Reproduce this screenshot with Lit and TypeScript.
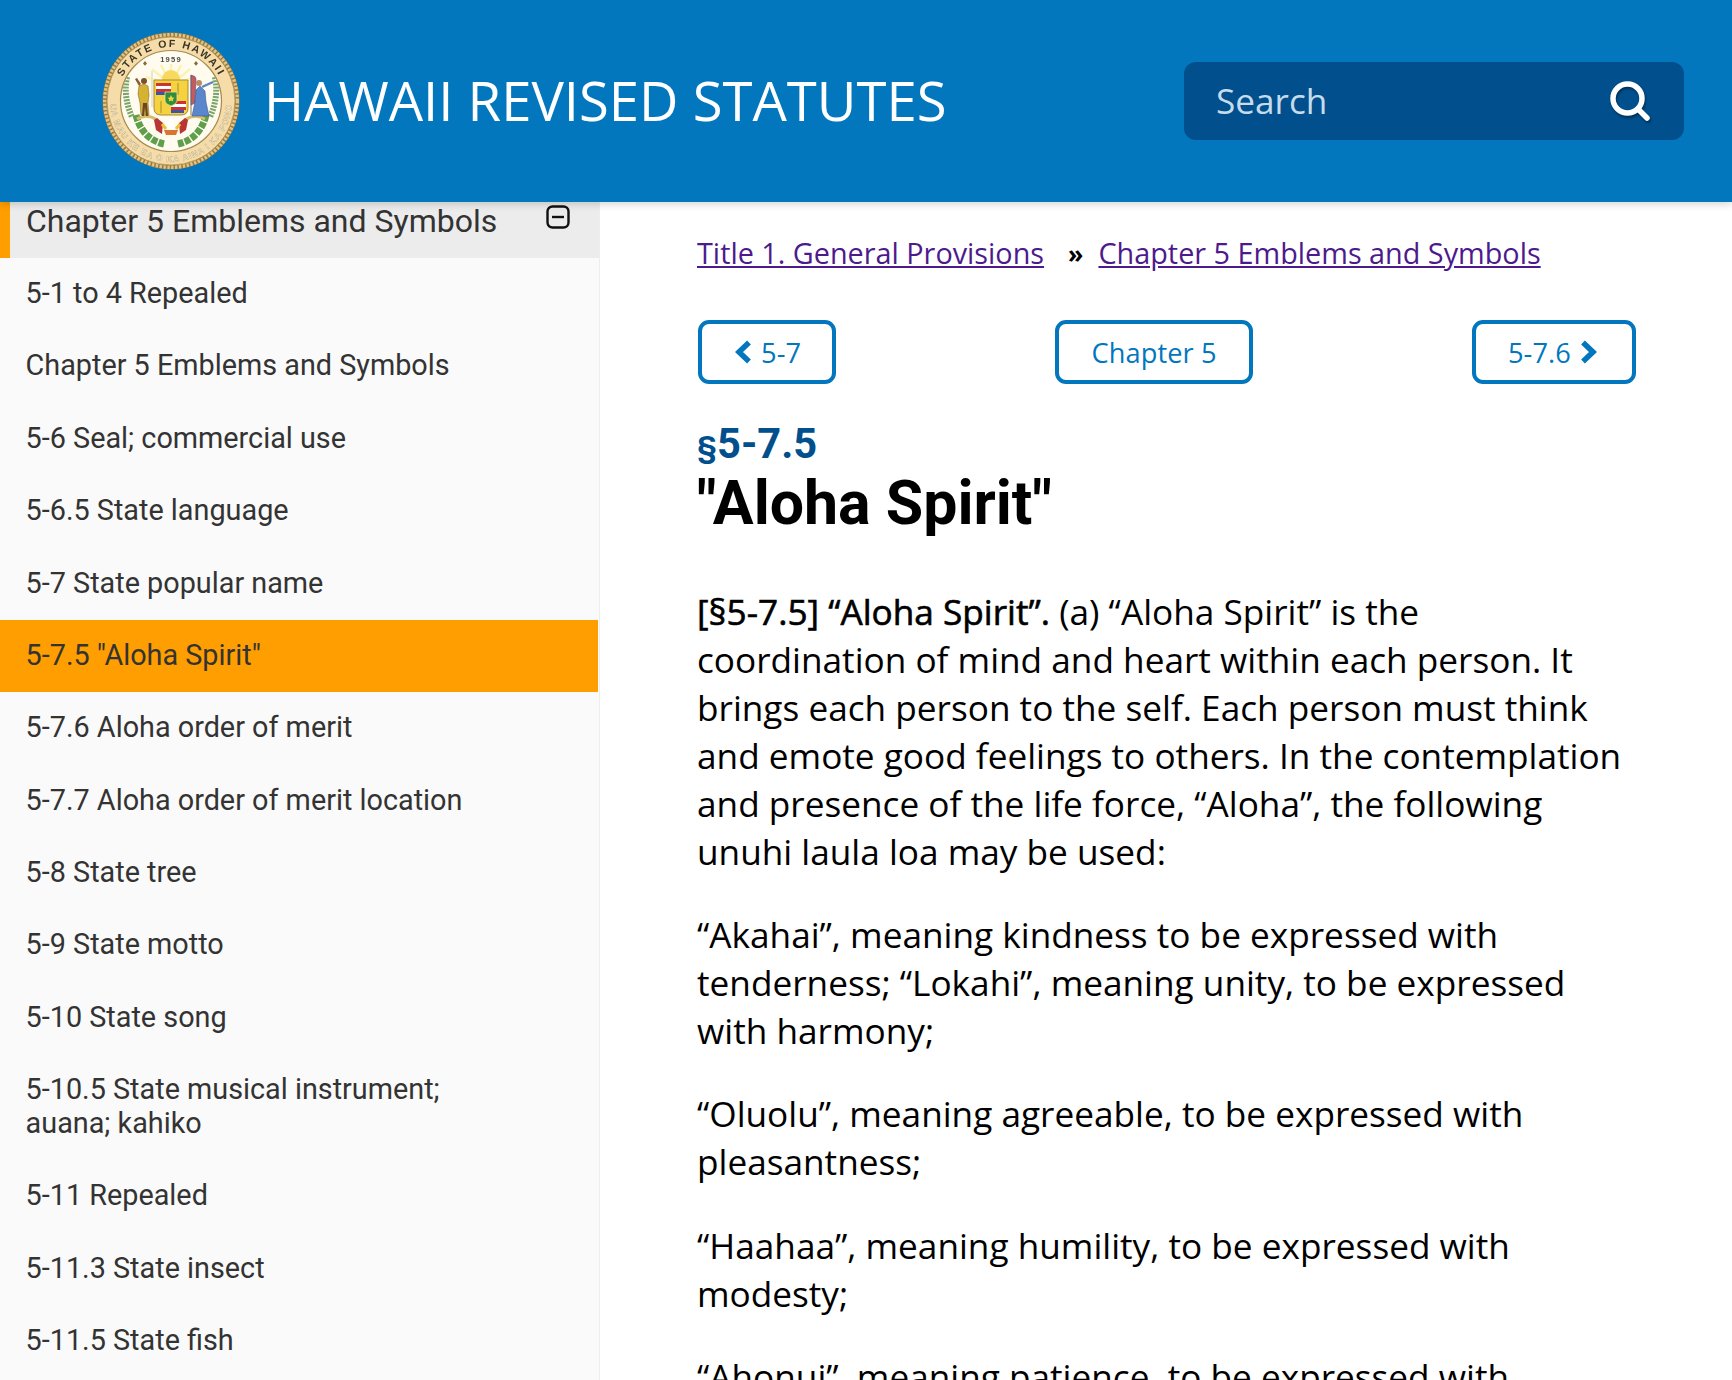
import { LitElement, html, css, svg } from "lit";
import { customElement } from "lit/decorators.js";

const ROWS: { t: string; active?: boolean }[] = [
  { t: "5-1 to 4 Repealed" },
  { t: "Chapter 5 Emblems and Symbols" },
  { t: "5-6 Seal; commercial use" },
  { t: "5-6.5 State language" },
  { t: "5-7 State popular name" },
  { t: '5-7.5 "Aloha Spirit"', active: true },
  { t: "5-7.6 Aloha order of merit" },
  { t: "5-7.7 Aloha order of merit location" },
  { t: "5-8 State tree" },
  { t: "5-9 State motto" },
  { t: "5-10 State song" },
  { t: "5-10.5 State musical instrument; auana; kahiko" },
  { t: "5-11 Repealed" },
  { t: "5-11.3 State insect" },
  { t: "5-11.5 State fish" },
];

const seal = svg`
<svg viewBox="0 0 140 140" width="140" height="140" aria-hidden="true">
  <defs>
    <path id="topArc" d="M 16 70 A 54 54 0 0 1 124 70"/>
    <path id="botArc" d="M 9 70 A 61 61 0 0 0 131 70"/>
    <clipPath id="inner"><circle cx="70" cy="70" r="50"/></clipPath>
  </defs>
  <circle cx="70" cy="70" r="68.5" fill="#9a7a3e"/>
  <circle cx="70" cy="70" r="66.3" fill="none" stroke="#e2c486" stroke-width="3.4" stroke-dasharray="2.4 1.5"/>
  <circle cx="70" cy="70" r="64" fill="#f6dca8" stroke="#b2924f" stroke-width=".8"/>
  <circle cx="70" cy="70" r="50.5" fill="#fffbee" stroke="#a68a52" stroke-width="1.2"/>
  <text font-family="Liberation Sans, sans-serif" font-size="10.5" font-weight="700" fill="#3a3426" letter-spacing="1.9"><textPath href="#topArc" startOffset="50%" text-anchor="middle">STATE OF HAWAII</textPath></text>
  <text font-family="Liberation Sans, sans-serif" font-size="8.6" font-weight="700" fill="#f4ead0" stroke="#b7a675" stroke-width=".35" letter-spacing=".9"><textPath href="#botArc" startOffset="50%" text-anchor="middle">UA MAU KE EA O KA AINA I KA PONO</textPath></text>
  <text x="70" y="30.5" text-anchor="middle" font-family="Liberation Sans, sans-serif" font-size="7.6" font-weight="700" fill="#4a4a4a" letter-spacing="1.2">1959</text>
  <path d="M44 30l2 2.4-2 2.4-2-2.4zM95 30l2 2.4-2 2.4-2-2.4z" fill="#8a6a38"/>
  <g clip-path="url(#inner)">
    <g stroke="#fbf3ae" stroke-width="2.4">
      <path d="M70 54V33M70 54L60 34M70 54L80 34M70 54L51 38M70 54L89 38M70 54L45 46M70 54L95 46"/>
    </g>
    <circle cx="70" cy="48" r="9" fill="#f8d95e"/>
    <path d="M26 46q-4 20 5 40M114 46q4 20-5 40" fill="none" stroke="#7ba56a" stroke-width="6" stroke-dasharray="2 1.2"/>
    <path d="M35 84q6 24 28 29M105 84q-6 24-28 29" fill="none" stroke="#5f9e4a" stroke-width="7" stroke-dasharray="6 1.4"/>
    <path d="M36 88q10-6 20 1M104 88q-10-6-20 1" fill="none" stroke="#d6bd6b" stroke-width="3"/>
  </g>
  <path d="M53 49h34v28q0 7-7 7H60q-7 0-7-7z" fill="#f5d33e" stroke="#a8893a" stroke-width="1"/>
  <path d="M55 52h15v3h-15zM55 58h15v3h-15z" fill="#c93434"/>
  <path d="M55 55h15v3h-15z" fill="#fff"/>
  <path d="M55 61h15v3h-15z" fill="#3a55a8"/>
  <path d="M70 70h15v3h-15zM70 76h15v3h-15z" fill="#c93434"/>
  <path d="M70 73h15v3h-15z" fill="#fff"/>
  <path d="M70 79h13v3H70z" fill="#3a55a8"/>
  <path d="M77 52v12M60 70v12" stroke="#a8893a" stroke-width="1"/>
  <path d="M64 61h12v9q0 3-6 5q-6-2-6-5z" fill="#2f8d3e" stroke="#eee39a" stroke-width=".8"/>
  <path d="M70 64l1.2 2.4 2.3.3-1.7 1.6.4 2.3-2.2-1.1-2.2 1.1.4-2.3-1.7-1.6 2.3-.3z" fill="#f5d33e"/>
  <path d="M38 55l5-2 4 2 1 9-1 8 1 12h-8l-1-12-2-9z" fill="#d6b233" stroke="#6f5a1e" stroke-width=".5"/>
  <path d="M38 55l-4-7 2-1 4 6z" fill="#8a5a30"/>
  <circle cx="43" cy="50" r="3" fill="#7d5028"/>
  <path d="M42 72h4l1 13h-2l-1-9-1 9h-2z" fill="#6a4526"/>
  <path d="M51 40v36" stroke="#e7e2d0" stroke-width="1.8"/>
  <path d="M90 44v40" stroke="#8f7a4a" stroke-width="1"/>
  <path d="M90 44q5 1 5 4l-1 24-4 2z" fill="#c85a5a" stroke="#3a55a8" stroke-width=".6"/>
  <path d="M99 55l-4 4-1 12-3 14h17l-3-14-1-11z" fill="#5a86cc" stroke="#2f4f8a" stroke-width=".5"/>
  <circle cx="98" cy="52" r="3" fill="#b98a64"/>
  <path d="M101 56l11-5" stroke="#5a86cc" stroke-width="2.4"/>
  <path d="M62 92l-6-5-3 2 2 10 6 4zM78 92l6-5 3 2-2 10-6 4z" fill="#b93434"/>
  <path d="M66 98l2-10h4l2 10z" fill="#fff"/>
  <path d="M63 99h14l-2 5H65z" fill="#d8752e"/>
  <path d="M61 93l4 5M79 93l-4 5" stroke="#e8c23a" stroke-width="3"/>
</svg>`;

@customElement("app-root")
export class AppRoot extends LitElement {
  static styles = css`
    :host {
      display: block;
      width: 1732px;
      height: 1380px;
      overflow: hidden;
      position: relative;
      background: #fff;
      font-family: "Open Sans", sans-serif;
      color: #000;
    }
    .top {
      position: relative;
      z-index: 2;
      height: 202px;
      background: #0277bd;
      box-shadow: 0 2px 8px rgba(0, 0, 0, 0.18);
      display: flex;
      align-items: center;
      padding: 0 48px 0 101px;
      box-sizing: border-box;
    }
    .seal {
      width: 140px;
      height: 140px;
      flex: none;
      display: block;
      filter: blur(0.35px);
    }
    .brand {
      margin: 0 0 2px 23px;
      font-size: 54.4px;
      font-weight: 400;
      color: #fff;
      white-space: nowrap;
      flex: 1;
    }
    .search {
      width: 500px;
      height: 78px;
      background: #014f8c;
      border-radius: 12px;
      display: flex;
      align-items: center;
      justify-content: space-between;
      padding: 0 32px;
      box-sizing: border-box;
      font-size: 35.2px;
      color: #c5dcec;
    }
    .search span {
      margin-bottom: 2px;
    }
    .search svg {
      display: block;
      filter: drop-shadow(1px 2px 1px rgba(0, 0, 0, 0.4));
    }
    .body {
      display: flex;
      height: 1178px;
      overflow: hidden;
    }
    .side {
      width: 600px;
      flex: none;
      background: #fafafa;
      border-right: 1px solid #eee;
      box-sizing: border-box;
      font-family: Roboto, sans-serif;
      color: #333;
      font-size: 28.8px;
      line-height: 33.6px;
      overflow: hidden;
    }
    .chap {
      height: 55.7px;
      box-sizing: border-box;
      background: #ececec;
      border-left: 10px solid #ff9e00;
      padding-left: 16px;
      padding-right: 29px;
      display: flex;
      justify-content: space-between;
      align-items: flex-start;
      font-size: 32px;
      line-height: 38px;
    }
    .chap svg {
      display: block;
      margin-top: 3px;
    }
    .row {
      padding: 19.4px 100px 19.4px 25.6px;
    }
    .row.on {
      background: #ff9e00;
      margin-right: 1px;
    }
    .main {
      flex: 1;
      min-width: 0;
      padding: 27px 96px 0 97px;
      box-sizing: border-box;
    }
    .crumbs {
      display: flex;
      align-items: center;
      font-size: 28.8px;
      line-height: 48px;
    }
    .crumbs a {
      color: #4d1a8c;
      text-decoration: underline;
    }
    .crumbs span {
      font-size: 25px;
      font-weight: 700;
      margin: 0 15px 0 24px;
    }
    .nav {
      display: flex;
      justify-content: space-between;
      margin-top: 43px;
      padding-left: 1px;
    }
    .btn {
      height: 64px;
      box-sizing: border-box;
      border: 4px solid #0277bd;
      border-radius: 11px;
      padding: 0 32px;
      display: flex;
      align-items: center;
      gap: 9px;
      font-size: 27.2px;
      letter-spacing: 0.1px;
      color: #0277bd;
    }
    .btn.prev {
      padding-right: 31px;
    }
    .btn.next {
      padding-right: 34px;
    }
    .sec {
      margin: 37px 0 0;
      font: 700 41.6px/46px Roboto, sans-serif;
      color: #014f8c;
    }
    .sec small {
      font-size: 32px;
    }
    h1 {
      margin: -1px 0 0;
      font: 700 60.8px/70px Roboto, sans-serif;
      color: #000;
    }
    .txt {
      margin-top: 48px;
    }
    .txt p {
      margin: 0 0 35.2px;
      font-size: 35.2px;
      line-height: 48px;
    }
    .txt b {
      font-weight: 400;
      -webkit-text-stroke: 0.6px #000;
    }
  `;

  render() {
    return html`
      <header class="top">
        <div class="seal">${seal}</div>
        <div class="brand">HAWAII REVISED STATUTES</div>
        <div class="search">
          <span>Search</span>
          <svg width="44" height="44" viewBox="0 0 44 44" fill="none" stroke="#fff" aria-hidden="true">
            <circle cx="19.5" cy="19.5" r="14.5" stroke-width="5.5"/>
            <path d="M30 30l9 9" stroke-width="5.5" stroke-linecap="round"/>
          </svg>
        </div>
      </header>
      <div class="body">
        <nav class="side">
          <div class="chap">
            <span>Chapter 5 Emblems and Symbols</span>
            <svg width="24" height="24" viewBox="0 0 24 24" fill="none" stroke="#111" stroke-width="2.4" aria-hidden="true">
              <rect x="1.5" y="1.5" width="21" height="21" rx="5"/>
              <path d="M6 12h12"/>
            </svg>
          </div>
          ${ROWS.map((r) => html`<div class="row ${r.active ? "on" : ""}">${r.t}</div>`)}
        </nav>
        <main class="main">
          <div class="crumbs">
            <a>Title 1. General Provisions</a><span>»</span><a>Chapter 5 Emblems and Symbols</a>
          </div>
          <div class="nav">
            <div class="btn prev">
              <svg width="18" height="24" viewBox="0 0 18 24" fill="none" stroke="#0277bd" stroke-width="5.5" aria-hidden="true"><path d="M15 2.5L5 12l10 9.5"/></svg>
              5-7
            </div>
            <div class="btn">Chapter 5</div>
            <div class="btn next">
              5-7.6
              <svg width="18" height="24" viewBox="0 0 18 24" fill="none" stroke="#0277bd" stroke-width="5.5" aria-hidden="true"><path d="M3 2.5L13 12 3 21.5"/></svg>
            </div>
          </div>
          <div class="sec"><small>§</small>5-7.5</div>
          <h1>"Aloha Spirit"</h1>
          <div class="txt">
            <p><b>[§5-7.5] “Aloha Spirit”.</b> (a) “Aloha Spirit” is the coordination of mind and heart within each person. It brings each person to the self. Each person must think and emote good feelings to others. In the contemplation and presence of the life force, “Aloha”, the following unuhi laula loa may be used:</p>
            <p>“Akahai”, meaning kindness to be expressed with tenderness; “Lokahi”, meaning unity, to be expressed with harmony;</p>
            <p>“Oluolu”, meaning agreeable, to be expressed with pleasantness;</p>
            <p>“Haahaa”, meaning humility, to be expressed with modesty;</p>
            <p>“Ahonui”, meaning patience, to be expressed with</p>
          </div>
        </main>
      </div>
    `;
  }
}
